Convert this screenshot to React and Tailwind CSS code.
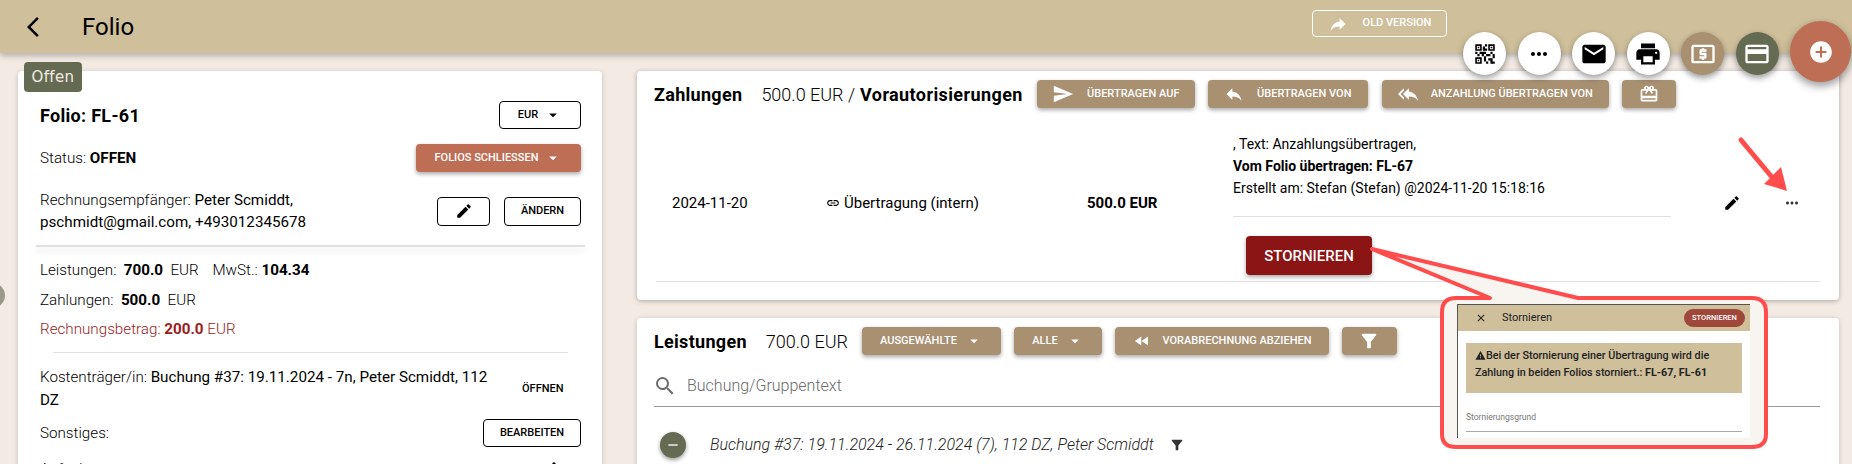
import React from "react";
import {
  MdAddCircle,
  MdArrowDropDown,
  MdArrowBackIosNew,
  MdEdit,
  MdEmail,
  MdFastRewind,
  MdFilterAlt,
  MdLink,
  MdMoreHoriz,
  MdMoreVert,
  MdOutlineCreditCard,
  MdOutlineLocalAtm,
  MdOutlineRedeem,
  MdPrint,
  MdQrCode2,
  MdRemove,
  MdReply,
  MdReplyAll,
  MdSearch,
  MdSend,
  MdClose,
  MdWarning,
} from "react-icons/md";

function OutlineBtn({ className, children }) {
  return (
    <button className={`h-[28px] flex items-center justify-center rounded border border-black bg-white text-[11px] font-medium text-black ${className}`}>
      {children}
    </button>
  );
}

function TanBtn({ className, children }) {
  return (
    <button className={`h-[28px] shrink-0 flex items-center justify-center rounded bg-[#a89071] text-[11px] font-medium text-white shadow-[0_2px_4px_rgba(0,0,0,0.35)] ${className}`}>
      {children}
    </button>
  );
}

function Fab({ className, children }) {
  return (
    <div className={`w-[43px] h-[43px] rounded-full flex items-center justify-center shadow-[0_3px_6px_rgba(0,0,0,0.4)] ${className}`}>
      {children}
    </div>
  );
}

export default function App() {
  return (
    <div className="relative w-[1852px] h-[464px] overflow-hidden bg-[#f3ebe3] text-black font-['Roboto',sans-serif]">
      {/* HEADER */}
      <header className="h-[53px] bg-[#cfbf9b] flex items-center shadow-[0_3px_6px_rgba(0,0,0,0.25)] relative">
        <MdArrowBackIosNew className="ml-[21px] text-[24px]" />
        <h1 className="ml-[37px] text-[24px]">Folio</h1>
        <button className="absolute left-[1312px] top-[10px] w-[135px] h-[27px] rounded border border-white flex items-center justify-center gap-[15px] text-[11px] font-medium text-white">
          <MdReply className="text-[20px] -scale-x-100" />
          OLD VERSION
        </button>
      </header>

      <div className="absolute -left-[20px] top-[283px] w-[25px] h-[25px] rounded-full bg-[#9a9a8a]" />

      <main className="flex items-start pl-[18px] pt-[18px] gap-[35px]">
        {/* FOLIO CARD */}
        <section className="relative w-[584px] h-[420px] shrink-0 rounded bg-white pl-[22px] pr-[21px] shadow-[0_1px_5px_rgba(0,0,0,0.2)] text-[15.2px] font-light">
          <div className="absolute left-[6px] -top-[9px] w-[58px] h-[30px] rounded bg-[#646b52] text-[#f3ebe3] flex items-center justify-center font-normal tracking-wide font-['DejaVu_Sans',sans-serif] text-[15px]">
            Offen
          </div>

          <div className="pt-[30px] flex items-center justify-between">
            <div className="text-[18px] font-bold tracking-[0.3px]">Folio: FL-61</div>
            <OutlineBtn className="w-[82px] gap-[6px]">
              EUR <MdArrowDropDown className="text-[18px]" />
            </OutlineBtn>
          </div>

          <div className="mt-[15px] flex items-center justify-between">
            <div>Status: <b className="font-bold">OFFEN</b></div>
            <button className="w-[165px] h-[28px] rounded bg-[#bd6e55] text-white text-[11px] font-medium flex items-center justify-center gap-[6px] shadow-[0_2px_4px_rgba(0,0,0,0.35)]">
              FOLIOS SCHLIESSEN <MdArrowDropDown className="text-[18px]" />
            </button>
          </div>

          <div className="mt-[17px] flex items-center justify-between">
            <div className="w-[300px] leading-[22px]">
              Rechnungsempfänger: <span className="font-normal">Peter Scmiddt, pschmidt@gmail.com, +493012345678</span>
            </div>
            <div className="flex gap-[14px]">
              <OutlineBtn className="w-[53px] !h-[29px]"><MdEdit className="text-[18px]" /></OutlineBtn>
              <OutlineBtn className="w-[77px] !h-[29px]">ÄNDERN</OutlineBtn>
            </div>
          </div>

          <div className="mt-[12px] -mx-[4px] h-[2px] bg-[#e0e0e0] shadow-[0_4px_6px_rgba(0,0,0,0.12)]" />

          <div className="mt-[12px] leading-[22px]">
            Leistungen:&nbsp; <b className="font-bold">700.0</b>&nbsp; EUR <span className="ml-[10px]">MwSt.:</span> <b className="font-bold">104.34</b>
          </div>
          <div className="mt-[8px] leading-[22px]">
            Zahlungen:&nbsp; <b className="font-bold">500.0</b>&nbsp; EUR
          </div>
          <div className="mt-[7px] leading-[22px] text-[#9b1c1c]">
            Rechnungsbetrag: <b className="font-bold">200.0</b> EUR
          </div>

          <div className="mt-[12px] mx-[13px] h-px bg-[#e0e0e0]" />

          <div className="mt-[13px] flex items-center">
            <div className="w-[460px] leading-[23px]">
              Kostenträger/in: <span className="font-normal">Buchung #37: 19.11.2024 - 7n, Peter Scmiddt, 112 DZ</span>
            </div>
            <div className="ml-[22px] text-[11px] font-medium">ÖFFNEN</div>
          </div>

          <div className="mt-[7px] flex items-center justify-between">
            <div>Sonstiges:</div>
            <OutlineBtn className="w-[98px]">BEARBEITEN</OutlineBtn>
          </div>

          <div className="mt-[11px] flex items-center justify-between leading-[22px]">
            <div>Aufgaben:</div>
            <MdMoreVert className="text-[20px] mr-[17px]" />
          </div>
        </section>

        <div className="w-[1202px] shrink-0">
          {/* ZAHLUNGEN */}
          <section className="h-[229px] rounded bg-white shadow-[0_1px_5px_rgba(0,0,0,0.3)] text-[15px]">
            <div className="pt-[9px] pl-[17px] flex items-center">
              <b className="text-[18px] font-bold tracking-[0.3px]">Zahlungen</b>
              <span className="ml-[19px] text-[18px] font-light">500.0 EUR /</span>
              <b className="ml-[5px] text-[18px] font-bold tracking-[0.4px]">Vorautorisierungen</b>
              <TanBtn className="ml-[14px] w-[158px] gap-[13px]"><MdSend className="text-[22px]" /> ÜBERTRAGEN AUF</TanBtn>
              <TanBtn className="ml-[13px] w-[160px] gap-[13px]"><MdReply className="text-[20px]" /> ÜBERTRAGEN VON</TanBtn>
              <TanBtn className="ml-[14px] w-[227px] gap-[13px]"><MdReplyAll className="text-[20px]" /> ANZAHLUNG ÜBERTRAGEN VON</TanBtn>
              <TanBtn className="ml-[13px] w-[54px]"><MdOutlineRedeem className="text-[20px]" /></TanBtn>
            </div>

            <div className="mt-[17px] mx-[19px] h-[157px] flex items-center border-b border-[#e0e0e0]">
              <div className="pl-[16px] w-[170px] shrink-0">2024-11-20</div>
              <div className="w-[261px] shrink-0 flex items-center gap-[4px]">
                <MdLink className="text-[14px]" /> Übertragung (intern)
              </div>
              <b className="w-[146px] shrink-0 font-bold">500.0 EUR</b>
              <div className="w-[438px] shrink-0 pt-[8px] self-stretch text-[14px] leading-[22px]">
                <div>, Text: Anzahlungsübertragen,</div>
                <div className="font-bold">Vom Folio übertragen: FL-67</div>
                <div>Erstellt am: Stefan (Stefan) @2024-11-20 15:18:16</div>
                <div className="mt-[17px] h-px bg-[#e0e0e0]" />
                <button className="mt-[19px] ml-[13px] w-[126px] h-[39px] rounded bg-[#8b1414] text-white text-[15px] font-medium shadow-[0_2px_4px_rgba(0,0,0,0.35)]">
                  STORNIEREN
                </button>
              </div>
              <MdEdit className="ml-[52px] text-[18px] shrink-0" />
              <MdMoreHoriz className="ml-[42px] text-[18px] text-[#333] shrink-0" />
            </div>
          </section>

          {/* LEISTUNGEN */}
          <section className="mt-[18px] h-[160px] rounded bg-white shadow-[0_1px_5px_rgba(0,0,0,0.2)] px-[17px] text-[16px]">
            <div className="pt-[9px] flex items-center">
              <b className="text-[18px] font-bold tracking-[0.3px]">Leistungen</b>
              <span className="ml-[19px] text-[18px] font-light">700.0 EUR</span>
              <TanBtn className="ml-[14px] w-[139px] gap-[8px]">AUSGEWÄHLTE <MdArrowDropDown className="text-[18px]" /></TanBtn>
              <TanBtn className="ml-[13px] w-[88px] gap-[8px]">ALLE <MdArrowDropDown className="text-[18px]" /></TanBtn>
              <TanBtn className="ml-[13px] w-[214px] gap-[12px]"><MdFastRewind className="text-[18px]" /> VORABRECHNUNG ABZIEHEN</TanBtn>
              <TanBtn className="ml-[13px] w-[55px]"><MdFilterAlt className="text-[22px]" /></TanBtn>
            </div>

            <div className="h-[52px] w-[1166px] border-b border-[#9a9a9a] flex items-center pt-[10px] text-[#6b6b6b]">
              <MdSearch className="text-[24px] -ml-[1px]" />
              <span className="ml-[10px] font-light">Buchung/Gruppentext</span>
            </div>

            <div className="mt-[25px] flex items-center">
              <div className="ml-[6px] w-[26px] h-[26px] rounded-full bg-[#646b52] flex items-center justify-center text-white shadow-[0_2px_4px_rgba(0,0,0,0.4)]">
                <MdRemove className="text-[16px]" />
              </div>
              <span className="ml-[24px] italic font-light text-[#222]">Buchung #37: 19.11.2024 - 26.11.2024 (7), 112 DZ, Peter Scmiddt</span>
              <MdFilterAlt className="ml-[15px] text-[16px] text-[#333]" />
            </div>
          </section>
        </div>
      </main>

      {/* FABS */}
      <div className="absolute left-[1463px] top-[32px] flex items-center gap-[11.6px]">
        <Fab className="bg-white"><MdQrCode2 className="text-[26px]" /></Fab>
        <Fab className="bg-white"><MdMoreHoriz className="text-[24px]" /></Fab>
        <Fab className="bg-white"><MdEmail className="text-[28px]" /></Fab>
        <Fab className="bg-white"><MdPrint className="text-[28px]" /></Fab>
        <Fab className="bg-[#a89071] text-white"><MdOutlineLocalAtm className="text-[28px]" /></Fab>
        <Fab className="bg-[#646b52] text-white"><MdOutlineCreditCard className="text-[28px]" /></Fab>
      </div>
      <div className="absolute left-[1790px] top-[21px] w-[61px] h-[61px] rounded-full bg-[#bd6e55] text-white flex items-center justify-center shadow-[0_4px_8px_rgba(0,0,0,0.4)]">
        <MdAddCircle className="text-[26px]" />
      </div>

      {/* ANNOTATION */}
      <svg className="absolute left-0 top-0 pointer-events-none" width="1852" height="464">
        <path
          d="M1490 298 L1372 249 L1578 298 L1752 298 Q1766 298 1766 312 L1766 434 Q1766 447 1752 447 L1456 447 Q1442 447 1442 434 L1442 312 Q1442 298 1456 298 Z"
          fill="#f8f4f0"
          stroke="#ff4d4d"
          strokeWidth="4"
          strokeLinejoin="round"
        />
        <path d="M1741 140 L1776 182" stroke="#ff4d4d" strokeWidth="5" strokeLinecap="round" />
        <path d="M1787 191 L1764 184 L1781 167 Z" fill="#ff4d4d" />
      </svg>

      <div className="absolute left-[1457px] top-[304px] w-[293px] h-[134px] bg-white border-l border-t border-[#555]">
        <div className="h-[26px] bg-[#cfbf9b] flex items-center text-[11px] text-[#222]">
          <MdClose className="ml-[17px] text-[12px]" />
          <span className="ml-[15px]">Stornieren</span>
          <span className="ml-auto mr-[5px] w-[61px] h-[18px] rounded-full bg-[#a0473c] text-white text-[7.5px] font-medium flex items-center justify-center">STORNIEREN</span>
        </div>
        <div className="mt-[12px] mx-[8px] h-[50px] bg-[#cfbf9b] px-[9px] pt-[4px] text-[10.8px] font-medium leading-[17px] text-[#222]">
          <div className="flex items-center"><MdWarning className="text-[11px] shrink-0" />Bei der Stornierung einer Übertragung wird die</div>
          <div>Zahlung in beiden Folios storniert.: <b className="font-bold">FL-67, FL-61</b></div>
        </div>
        <div className="mt-[18px] mx-[8px] pb-[7px] border-b border-[#aaa] text-[8.5px] text-[#777]">Stornierungsgrund</div>
      </div>
    </div>
  );
}
